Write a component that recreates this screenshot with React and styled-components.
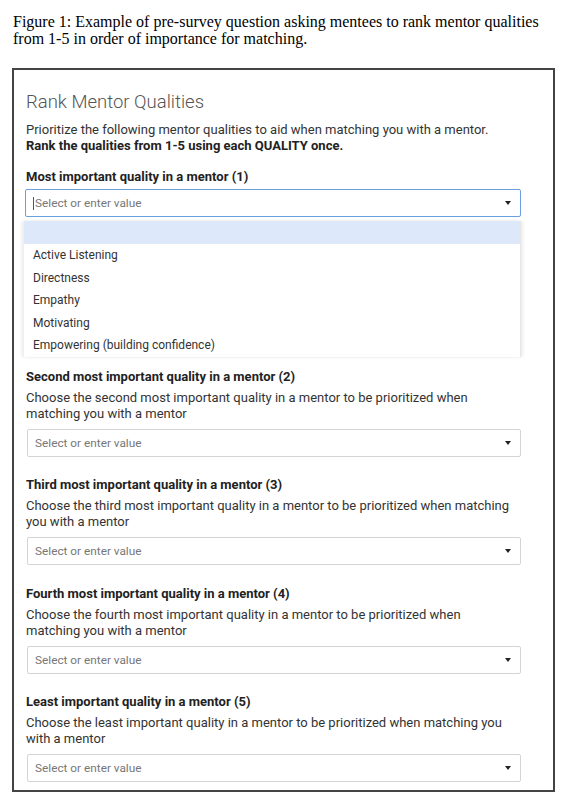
import React from "react";
import styled, { createGlobalStyle } from "styled-components";

const GlobalStyle = createGlobalStyle`
  html, body {
    margin: 0;
    padding: 0;
    background: #ffffff;
  }
  body {
    font-family: Roboto, "Liberation Sans", Arial, sans-serif;
  }
`;

const Page = styled.div`
  width: 565px;
  padding: 13px 0 0 13px;
  box-sizing: border-box;
`;

const Caption = styled.p`
  margin: 0;
  font-family: "Liberation Serif", "Times New Roman", serif;
  font-size: 16px;
  line-height: 17px;
  color: #000;
  width: 530px;
`;

const Frame = styled.section`
  margin: 21px 0 0 -1px;
  width: 543px;
  box-sizing: border-box;
  border: 2px solid #444;
  padding: 21px 32px 8px 12px;
`;

const Title = styled.h1`
  margin: 0;
  font-size: 18.5px;
  line-height: 22px;
  font-weight: 300;
  color: #555;
`;

const Intro = styled.p`
  margin: 9px 0 0;
  font-size: 13px;
  line-height: 16px;
  color: #333;

  strong {
    font-weight: 700;
    color: #222;
  }
`;

const Field = styled.div`
  margin-top: ${(p) => p.$top}px;
`;

const Label = styled.div`
  font-size: 13px;
  line-height: 16px;
  font-weight: 700;
  color: #222;
`;

const Hint = styled.div`
  margin-top: 5px;
  max-width: 488px;
  font-size: 13px;
  line-height: 16px;
  color: #333;
`;

const Select = styled.div`
  margin-top: ${(p) => (p.$afterHint ? 7 : 4)}px;
  margin-left: ${(p) => (p.$focused ? -1 : 1)}px;
  height: 28px;
  box-sizing: border-box;
  border: 1px solid ${(p) => (p.$focused ? "#6a9fe0" : "#d4d4d4")};
  border-radius: 2px;
  display: flex;
  align-items: center;
  justify-content: space-between;
  padding: 0 9px 0 7px;
  font-size: 11.8px;
  color: #777;
`;

const Placeholder = styled.span`
  display: flex;
  align-items: center;
`;

const Caret = styled.span`
  width: 1px;
  height: 13px;
  background: #555;
  margin-right: 1px;
`;

const Arrow = styled.span`
  width: 0;
  height: 0;
  border-left: 3.5px solid transparent;
  border-right: 3.5px solid transparent;
  border-top: 4px solid #222;
`;

const Menu = styled.ul`
  list-style: none;
  margin: 4px 0 0 -3px;
  padding: 0;
  width: 496px;
  background: #fff;
  box-shadow: -2px 0 3px rgba(0, 0, 0, 0.06), 2px 0 3px rgba(0, 0, 0, 0.08);
  border-left: 1px solid #eee;
  border-right: 1px solid #e6e6e6;
`;

const Option = styled.li`
  height: ${(p) => (p.$active ? 23 : 22.5)}px;
  display: flex;
  align-items: center;
  padding: 0 9px;
  font-size: 12px;
  color: #333;
  background: ${(p) => (p.$active ? "#dde9fb" : "#fff")};
`;

const qualities = [
  "Active Listening",
  "Directness",
  "Empathy",
  "Motivating",
  "Empowering (building confidence)",
];

const questions = [
  {
    label: "Second most important quality in a mentor (2)",
    hint: "Choose the second most important quality in a mentor to be prioritized when matching you with a mentor",
  },
  {
    label: "Third most important quality in a mentor (3)",
    hint: "Choose the third most important quality in a mentor to be prioritized when matching you with a mentor",
  },
  {
    label: "Fourth most important quality in a mentor (4)",
    hint: "Choose the fourth most important quality in a mentor to be prioritized when matching you with a mentor",
  },
  {
    label: "Least important quality in a mentor (5)",
    hint: "Choose the least important quality in a mentor to be prioritized when matching you with a mentor",
  },
];

export default function App() {
  return (
    <Page>
      <GlobalStyle />
      <Caption>
        Figure 1: Example of pre-survey question asking mentees to rank mentor qualities
        from 1-5 in order of importance for matching.
      </Caption>
      <Frame>
        <Title>Rank Mentor Qualities</Title>
        <Intro>
          Prioritize the following mentor qualities to aid when matching you with a mentor.
          <br />
          <strong>Rank the qualities from 1-5 using each QUALITY once.</strong>
        </Intro>

        <Field $top={15}>
          <Label>Most important quality in a mentor (1)</Label>
          <Select $focused>
            <Placeholder>
              <Caret />
              Select or enter value
            </Placeholder>
            <Arrow />
          </Select>
          <Menu>
            <Option $active />
            {qualities.map((q) => (
              <Option key={q}>{q}</Option>
            ))}
          </Menu>
        </Field>

        {questions.map((q, i) => (
          <Field key={q.label} $top={i === 0 ? 12 : 20.5}>
            <Label>{q.label}</Label>
            <Hint>{q.hint}</Hint>
            <Select $afterHint>
              <Placeholder>Select or enter value</Placeholder>
              <Arrow />
            </Select>
          </Field>
        ))}
      </Frame>
    </Page>
  );
}
